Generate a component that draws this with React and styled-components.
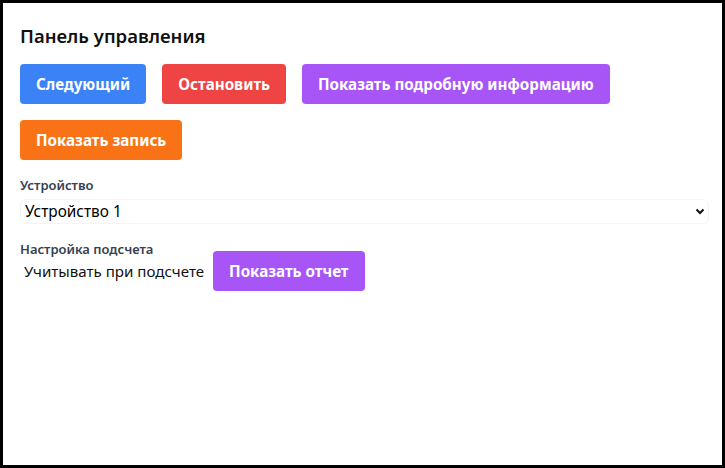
import React from "react";
import styled, { createGlobalStyle } from "styled-components";

const GlobalStyle = createGlobalStyle`
  html, body {
    margin: 0;
    padding: 0;
    background: #ffffff;
  }
  body {
    font-family: "Noto Sans", "Open Sans", sans-serif;
  }
  * {
    box-sizing: border-box;
  }
`;

const Frame = styled.div`
  width: 725px;
  height: 468px;
  border: 3px solid #000;
  padding: 19px 13px 0 17px;
  background: #fff;
`;

const Title = styled.h2`
  margin: 0 0 14px;
  font-size: 18.5px;
  line-height: 28px;
  font-weight: 600;
  color: #111;
`;

const ButtonRow = styled.div`
  display: flex;
  flex-wrap: wrap;
  gap: 16px;
  width: 620px;
`;

const Button = styled.button`
  height: 40px;
  padding: 0 16px;
  border: none;
  border-radius: 4px;
  background: ${(p) => p.$bg};
  color: #fff;
  font-family: inherit;
  font-size: 15.2px;
  font-weight: 700;
  cursor: pointer;
`;

const Field = styled.div`
  margin-top: 16px;
  display: flex;
  flex-direction: column;
`;

const Label = styled.label`
  font-size: 13px;
  line-height: 19px;
  font-weight: 600;
  color: #374151;
`;

const SelectWrap = styled.div`
  position: relative;
  margin-top: 4px;
`;

const Select = styled.select`
  appearance: none;
  width: 100%;
  height: 25px;
  padding: 0 4px;
  border: 1px solid #f3f4f6;
  border-radius: 6px;
  background: #fff;
  font-family: inherit;
  font-size: 15.4px;
  color: #000;
  outline: none;
`;

const Chevron = styled.svg`
  position: absolute;
  right: 4px;
  top: 9px;
  pointer-events: none;
`;

const CountRow = styled.div`
  display: flex;
  align-items: center;
  gap: 9px;
  margin-top: -8px;
`;

const CountText = styled.span`
  padding-left: 4px;
  font-size: 15.1px;
  color: #111;
`;

export default function App() {
  return (
    <>
      <GlobalStyle />
      <Frame>
        <Title>Панель управления</Title>
        <ButtonRow>
          <Button $bg="#3b82f6">Следующий</Button>
          <Button $bg="#ef4444">Остановить</Button>
          <Button $bg="#a855f7">Показать подробную информацию</Button>
          <Button $bg="#f97316">Показать запись</Button>
        </ButtonRow>
        <Field>
          <Label>Устройство</Label>
          <SelectWrap>
            <Select defaultValue="1">
              <option value="1">Устройство 1</option>
              <option value="2">Устройство 2</option>
            </Select>
            <Chevron width="10" height="7" viewBox="0 0 10 7">
              <path d="M1.5 1.5 L5 5 L8.5 1.5" fill="none" stroke="#111" strokeWidth="2" />
            </Chevron>
          </SelectWrap>
        </Field>
        <Field>
          <Label>Настройка подсчета</Label>
          <CountRow>
            <CountText>Учитывать при подсчете</CountText>
            <Button $bg="#a855f7">Показать отчет</Button>
          </CountRow>
        </Field>
      </Frame>
    </>
  );
}
